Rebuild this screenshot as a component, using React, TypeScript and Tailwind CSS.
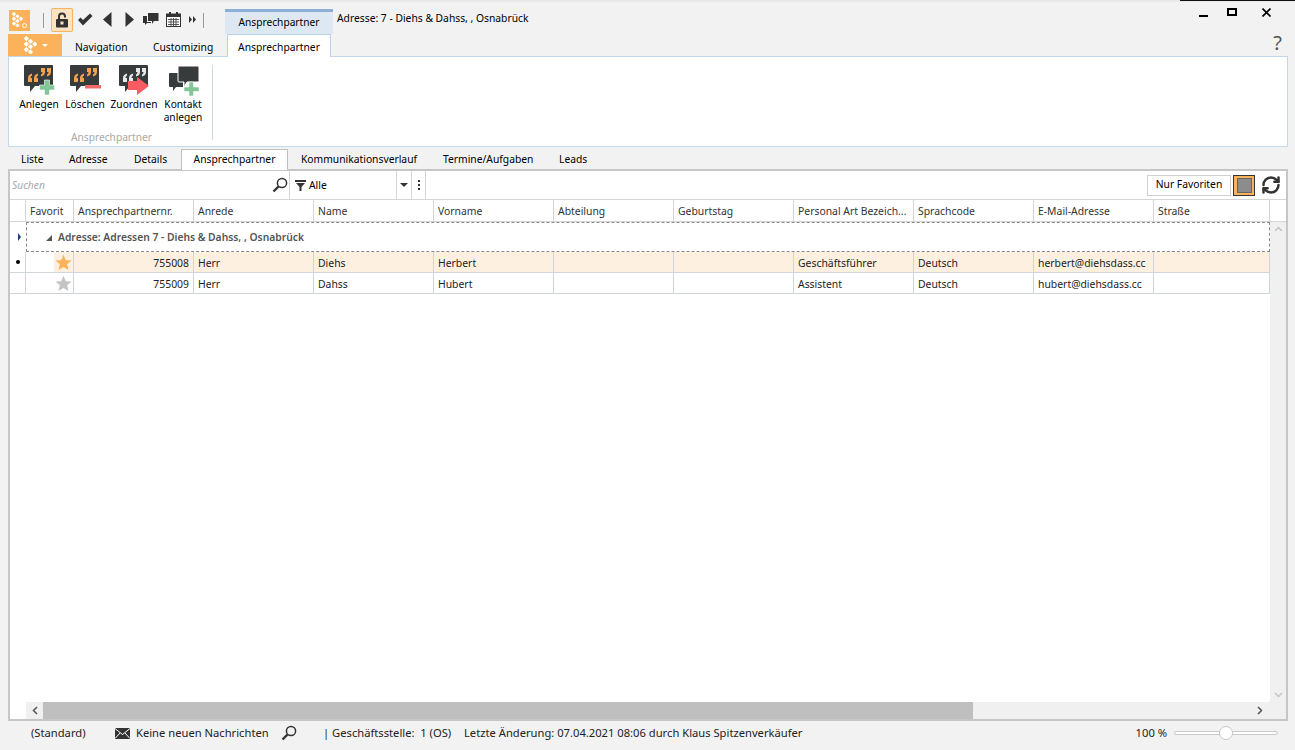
import { RefreshCw } from "lucide-react";

const font = "font-['Noto_Sans','Open_Sans',sans-serif]";

const columns = [
  { label: "Anrede", w: "w-[120px]" },
  { label: "Name", w: "w-[120px]" },
  { label: "Vorname", w: "w-[120px]" },
  { label: "Abteilung", w: "w-[120px]" },
  { label: "Geburtstag", w: "w-[120px]" },
  { label: "Personal Art Bezeich...", w: "w-[120px]" },
  { label: "Sprachcode", w: "w-[120px]" },
  { label: "E-Mail-Adresse", w: "w-[120px]" },
  { label: "Straße", w: "w-[116px]" },
];

const rows = [
  { nr: "755008", cells: ["Herr", "Diehs", "Herbert", "", "", "Geschäftsführer", "Deutsch", "herbert@diehsdass.cc", ""], active: true },
  { nr: "755009", cells: ["Herr", "Dahss", "Hubert", "", "", "Assistent", "Deutsch", "hubert@diehsdass.cc", ""], active: false },
];

// ── Icons ─────────────────────────────────────────────────────────────────────

function Dots({ w, h }: { w: number; h: number }) {
  const pts = [[2.5, 2.5], [2.5, 8.5], [2.5, 14.5], [7, 5.5], [7, 11.5], [11.5, 8.5], [7, 17]];
  return (
    <svg width={w} height={h} viewBox="0 0 14 19">
      {pts.map(([x, y], i) => (
        <rect key={i} x={x - 2} y={y - 2} width="4" height="4" transform={`rotate(45 ${x} ${y})`} fill="#fff" />
      ))}
    </svg>
  );
}

function Magnifier({ size }: { size: number }) {
  return (
    <svg width={size} height={size} viewBox="0 0 16 16">
      <circle cx="10" cy="6" r="4.6" fill="none" stroke="#333" strokeWidth="1.5" />
      <path d="M6.500 9.500L1.500 14.500" stroke="#333" strokeWidth="2.400" />
    </svg>
  );
}

function Bubble({ quote, badge }: { quote: string; badge: "plus" | "minus" | "arrow" }) {
  return (
    <svg width="31" height="31" viewBox="0 0 31 31">
      <path d="M1 0h27a1 1 0 0 1 1 1v19a1 1 0 0 1-1 1H11l-5 6v-6H1a1 1 0 0 1-1-1V1a1 1 0 0 1 1-1z" fill="#383b3c" />
      <path d="M4 17v-4q0-3.500 4-4.500v2q-1.500.5-1.500 2.500H8v4zM10 17v-4q0-3.500 4-4.500v2q-1.500.5-1.500 2.500H14v4z" fill={quote} />
      <path d="M27 3v4q0 3.500-4 4.500v-2q1.500-.5 1.500-2.500H23V3zM21 3v4q0 3.500-4 4.500v-2q1.500-.5 1.500-2.500H17V3z" fill={quote} />
      {badge === "plus" && <path d="M20.500 15h5v5h5v5h-5v5h-5v-5h-5v-5h5z" fill="#82c596" stroke="#fff" strokeWidth="0.6" />}
      {badge === "minus" && <rect x="15" y="20" width="16" height="3.500" fill="#ef6b6b" />}
      {badge === "arrow" && <path d="M9 16h9v-4l12 9-12 9v-5H9z" fill="#fa5c62" />}
    </svg>
  );
}

function ContactIcon() {
  return (
    <svg width="31" height="31" viewBox="0 0 31 31">
      <path d="M2 8h13v14H8l-3 4v-4H2a1 1 0 0 1-1-1V9a1 1 0 0 1 1-1z" fill="#383b3c" />
      <path d="M11 1h19a1 1 0 0 1 1 1v14a1 1 0 0 1-1 1H19l-3 5v-5h-5a1 1 0 0 1-1-1V2a1 1 0 0 1 1-1z" fill="#383b3c" stroke="#fff" strokeWidth="1" />
      <path d="M21 17h4.500v5H31v4.500h-5.500V31H21v-4.500h-5V22h5z" fill="#82c596" stroke="#fff" strokeWidth="0.6" />
    </svg>
  );
}

function Star({ color }: { color: string }) {
  return (
    <svg width="17" height="17" viewBox="0 0 24 24">
      <path d="M12 1l3.200 7.700 8.300.6-6.400 5.300 2 8.100L12 18.400l-7.100 4.300 2-8.100L.5 9.300l8.300-.6z" fill={color} />
    </svg>
  );
}

function RibbonButton({ label, icon, w }: { label: string; icon: React.ReactNode; w: string }) {
  return (
    <div className={`flex flex-col items-center ${w}`}>
      <div className="h-[33px] flex items-start">{icon}</div>
      <span className="text-[10.200px] leading-[13px] text-black text-center">{label}</span>
    </div>
  );
}

function Sep() {
  return <div className="w-[1px] h-[15px] bg-[#9a9a9a]" />;
}

// ── Top area ──────────────────────────────────────────────────────────────────

function TitleBar() {
  return (
    <div className="h-[34px] flex items-start relative border-t-2 border-[#e9e9e9]">
      <div className="ml-[9px] mt-[8px] w-[21px] h-[21px] bg-[#fbb25a] relative pl-[3px] pt-[2px]">
        <Dots w={11} h={15} />
        <span className="absolute right-[3px] bottom-[3px] w-[5px] h-[5px] rounded-full border border-white" />
      </div>
      <div className="ml-[13px] mt-[11px]"><Sep /></div>
      <div className="ml-[7px] mt-[6px] w-[22px] h-[24px] bg-[#fde3c4] border border-[#fbb25a] rounded-[2px] flex items-center justify-center">
        <svg width="14" height="16" viewBox="0 0 14 16">
          <path d="M3 7V4.500a4 4 0 0 1 8 0V5.500H9V4.500a2 2 0 0 0-4 0V7z" fill="#333" />
          <rect x="1" y="7" width="12" height="8.500" rx="1" fill="#333" />
          <rect x="5.500" y="9.500" width="3" height="3" fill="#fde3c4" />
        </svg>
      </div>
      <svg className="ml-[4px] mt-[11px]" width="16" height="13" viewBox="0 0 16 13">
        <path d="M1 7l2.500-2.500L6 7l7-6.500L15.500 3 6 12.500z" fill="#333" />
      </svg>
      <svg className="ml-[10px] mt-[10px]" width="9" height="15" viewBox="0 0 9 15">
        <path d="M8.500 0v15L0 7.500z" fill="#333" />
      </svg>
      <svg className="ml-[13px] mt-[10px]" width="9" height="15" viewBox="0 0 9 15">
        <path d="M.5 0v15L9 7.500z" fill="#333" />
      </svg>
      <svg className="ml-[9px] mt-[10px]" width="16" height="14" viewBox="0 0 16 14">
        <path d="M5 1h10.500v8H11l-2 3V9H5z" fill="#333" />
        <path d="M0 4h4v6h4v1H4l-2 2v-2H0z" fill="#333" />
      </svg>
      <svg className="ml-[7px] mt-[10px]" width="15" height="15" viewBox="0 0 15 15">
        <rect x=".5" y="2" width="14" height="12.500" fill="#fff" stroke="#333" />
        <rect x="0" y="2" width="15" height="3" fill="#333" />
        <rect x="3" y="0" width="2" height="3" fill="#333" />
        <rect x="10" y="0" width="2" height="3" fill="#333" />
        <path d="M2 7.500h11M2 10h11M2 12.500h11M5 6v8M7.500 6v8M10 6v8" stroke="#555" strokeWidth="1" />
      </svg>
      <svg className="ml-[8px] mt-[14px]" width="7" height="7" viewBox="0 0 7 7">
        <path d="M0 0l3 3.500L0 7zM4 0l3 3.500L4 7z" fill="#333" />
      </svg>
      <div className="ml-[7px] mt-[11px]"><Sep /></div>
      <div className="ml-[21px] mt-[7px] w-[108px] h-[25px] bg-[#dee8f3] border-t-[3px] border-[#8fb0d6] text-[10.200px] text-black flex items-center justify-center">
        Ansprechpartner
      </div>
      <span className="ml-[4px] mt-[9px] text-[10.300px] text-black">Adresse: 7 - Diehs &amp; Dahss, , Osnabrück</span>
      <div className="ml-auto mr-[24px] flex items-start mt-[4px]">
        <div className="w-[9px] h-[2px] bg-black mt-[9px]" />
        <div className="w-[10px] h-[8px] border-2 border-black mt-[2px] ml-[19px]" />
        <svg className="mt-[2px] ml-[25px]" width="9" height="9" viewBox="0 0 9 9">
          <path d="M.5.500l8 8M8.500.500l-8 8" stroke="#000" strokeWidth="1.600" />
        </svg>
      </div>
      <div className="absolute right-0 top-[-2px] w-[115px] h-[1px] bg-[#111]" />
    </div>
  );
}

function RibbonTabs() {
  return (
    <div className="h-[22px] flex items-stretch relative z-10 text-[10.300px] text-black">
      <div className="ml-[8px] w-[54px] bg-[#fbb25a] flex items-center justify-center gap-[5px] pl-[2px]">
        <Dots w={13} h={18} />
        <span className="w-0 h-0 border-x-[3px] border-x-transparent border-t-[3px] border-t-white" />
      </div>
      <span className="ml-[13px] w-[78px] mt-[6px]">Navigation</span>
      <span className="w-[74px] mt-[6px]">Customizing</span>
      <div className="w-[104px] h-[23px] bg-white border border-b-0 border-[#b9d0e8] flex items-center justify-center pt-[3px]">
        Ansprechpartner
      </div>
      <span className="ml-auto mr-[13px] text-[20px] leading-[20px] mt-[-1px] text-[#555]">?</span>
    </div>
  );
}

function Ribbon() {
  return (
    <div className="mx-[8px] w-[1280px] h-[91px] bg-white border border-[#c4d6e9] flex pl-[9px] pt-[8px]">
      <div className="w-[195px] flex flex-col items-center">
        <div className="flex items-start w-full h-[66px]">
          <RibbonButton label="Anlegen" w="w-[42px]" icon={<Bubble quote="#f5a24b" badge="plus" />} />
          <RibbonButton label="Löschen" w="w-[50px]" icon={<Bubble quote="#f5a24b" badge="minus" />} />
          <RibbonButton label="Zuordnen" w="w-[48px]" icon={<Bubble quote="#e8e8e8" badge="arrow" />} />
          <RibbonButton label="Kontakt anlegen" w="w-[50px]" icon={<ContactIcon />} />
        </div>
        <span className="text-[10.200px] leading-[13px] text-[#a9a9a9] mr-[8px]">Ansprechpartner</span>
      </div>
      <div className="w-[1px] h-[75px] bg-[#cfd8e3] ml-[-1px]" />
    </div>
  );
}

function PageTabs() {
  return (
    <div className="h-[21px] mt-[2px] flex items-start relative z-10 text-[10.300px] text-black pl-[21px]">
      <span className="w-[48px] mt-[3px]">Liste</span>
      <span className="w-[65px] mt-[3px]">Adresse</span>
      <span className="w-[47px] mt-[3px]">Details</span>
      <div className="w-[107px] h-[21px] bg-white border border-b-0 border-[#c0c0c0] flex items-center justify-center">
        Ansprechpartner
      </div>
      <span className="ml-[13px] w-[142px] mt-[3px]">Kommunikationsverlauf</span>
      <span className="w-[116px] mt-[3px]">Termine/Aufgaben</span>
      <span className="mt-[3px]">Leads</span>
    </div>
  );
}

// ── Grid panel ────────────────────────────────────────────────────────────────

function FilterBar() {
  return (
    <div className="h-[29px] flex items-stretch border-b border-[#d5d5d5] text-[10.300px]">
      <div className="w-[280px] flex items-center pl-[2px] pr-[1px] border-r border-[#d5d5d5]">
        <span className="italic text-[#a8a8a8] flex-1 pt-[2px]">Suchen</span>
        <Magnifier size={16} />
      </div>
      <div className="w-[107px] flex items-center pl-[5px] gap-[3px] border-r border-[#d5d5d5]">
        <svg width="11" height="11" viewBox="0 0 11 11">
          <path d="M0 0h11v2H0zM1 3h9L6.500 7v4h-2V7z" fill="#333" />
        </svg>
        <span className="text-black pt-[2px]">Alle</span>
      </div>
      <div className="w-[15px] flex items-center justify-center border-r border-[#d5d5d5]">
        <span className="w-0 h-0 border-x-[4px] border-x-transparent border-t-[4px] border-t-[#333]" />
      </div>
      <div className="w-[14px] flex flex-col items-center justify-center gap-[2px] border-r border-[#d5d5d5]">
        <span className="w-[2px] h-[2px] bg-[#333]" />
        <span className="w-[2px] h-[2px] bg-[#333]" />
        <span className="w-[2px] h-[2px] bg-[#333]" />
      </div>
      <div className="flex-1 flex items-center justify-end pr-[5px] gap-[2px]">
        <div className="w-[84px] h-[21px] border border-[#d0d0d0] bg-white text-black flex items-center justify-center">
          Nur Favoriten
        </div>
        <div className="w-[22px] h-[21px] border border-[#333] bg-[#fbb25a] flex items-center justify-center">
          <div className="w-[15px] h-[15px] bg-[#8c8c8c] border border-[#666]" />
        </div>
        <RefreshCw size={20} strokeWidth={3} className="text-[#333] ml-[4px]" />
      </div>
    </div>
  );
}

function HeaderRow() {
  return (
    <div className="h-[22px] flex border-b border-[#d5d5d5] text-[10.400px] text-[#333]">
      <div className="w-[16px] border-r border-[#d5d5d5]" />
      <div className="w-[48px] border-r border-[#d5d5d5] pl-[4px] pt-[3px] flex items-center">Favorit</div>
      <div className="w-[120px] border-r border-[#d5d5d5] pl-[4px] pt-[3px] flex items-center">Ansprechpartnernr.</div>
      {columns.map((c) => (
        <div key={c.label} className={`${c.w} border-r border-[#d5d5d5] pl-[4px] pt-[3px] flex items-center`}>{c.label}</div>
      ))}
    </div>
  );
}

function GroupRow() {
  return (
    <div className="h-[30px] flex">
      <div className="w-[16px] flex items-center justify-center pl-[2px]">
        <span className="w-0 h-0 border-y-[4px] border-y-transparent border-l-[3px] border-l-[#1c3f7c]" />
      </div>
      <div className="w-[1244px] border border-dashed border-[#8a8a8a] flex items-center pl-[19px] pt-[2px] text-[10.300px] font-semibold text-[#555]">
        <span className="w-0 h-0 border-l-[6px] border-l-transparent border-b-[6px] border-b-[#555] mr-[6px]" />
        Adresse: Adressen 7 - Diehs &amp; Dahss, , Osnabrück
      </div>
    </div>
  );
}

function DataRow({ nr, cells, active }: { nr: string; cells: string[]; active: boolean }) {
  const bg = active ? "bg-[#fdf0e0]" : "bg-white";
  return (
    <div className="h-[21px] flex border-b border-[#d0d5dc] text-[10.400px] text-[#222]">
      <div className="w-[16px] flex items-center justify-center border-r border-[#d5d5d5] bg-white">
        {active && <span className="w-[4px] h-[4px] rounded-full bg-black" />}
      </div>
      <div className="w-[28px] bg-white" />
      <div className={`w-[20px] ${bg} border-r border-[#d0d5dc] flex items-center justify-center`}>
        <Star color={active ? "#fbb25a" : "#c4c4c4"} />
      </div>
      <div className={`w-[120px] ${bg} border-r border-[#d0d5dc] pr-[4px] pt-[4px] flex items-center justify-end`}>{nr}</div>
      {columns.map((c, i) => (
        <div key={c.label} className={`${c.w} ${bg} border-r border-[#d0d5dc] pl-[4px] pt-[4px] flex items-center`}>{cells[i]}</div>
      ))}
    </div>
  );
}

function Panel() {
  return (
    <div className="mx-[8px] mt-[-1px] w-[1280px] h-[552px] border-2 border-[#c6c6c6] bg-white flex flex-col">
      <FilterBar />
      <HeaderRow />
      <div className="flex-1 flex min-h-0">
        <div className="w-[1260px] flex flex-col">
          <GroupRow />
          <DataRow {...rows[0]} />
          <DataRow {...rows[1]} />
        </div>
        <div className="flex-1 bg-[#f0f0f0] flex flex-col items-center justify-between py-[4px] text-[#c4c4c4]">
          <svg width="9" height="6" viewBox="0 0 9 6"><path d="M1 5l3.500-3.500L8 5" fill="none" stroke="currentColor" strokeWidth="1.5" /></svg>
          <svg width="9" height="6" viewBox="0 0 9 6"><path d="M1 1l3.500 3.500L8 1" fill="none" stroke="currentColor" strokeWidth="1.5" /></svg>
        </div>
      </div>
      <div className="h-[17px] flex">
        <div className="w-[16px] bg-white" />
        <div className="flex-1 bg-[#f0f0f0] flex items-center text-[#555]">
          <div className="w-[17px] flex justify-center">
            <svg width="6" height="9" viewBox="0 0 6 9"><path d="M5 1L1.500 4.500 5 8" fill="none" stroke="currentColor" strokeWidth="1.5" /></svg>
          </div>
          <div className="w-[930px] h-full bg-[#bfbfbf]" />
          <div className="flex-1 flex justify-end pr-[23px]">
            <svg width="6" height="9" viewBox="0 0 6 9"><path d="M1 1l3.500 3.500L1 8" fill="none" stroke="currentColor" strokeWidth="1.5" /></svg>
          </div>
        </div>
      </div>
    </div>
  );
}

function StatusBar() {
  return (
    <div className="h-[29px] flex items-center text-[11.200px] text-[#222] pb-[5px]">
      <span className="ml-[31px] w-[84px]">(Standard)</span>
      <svg width="15" height="11" viewBox="0 0 15 11">
        <rect width="15" height="11" fill="#333" />
        <path d="M0 .5l7.500 6 7.500-6M0 10.500l5-5.500M15 10.500l-5-5.500" fill="none" stroke="#fff" strokeWidth="1" />
      </svg>
      <span className="ml-[6px] w-[133px]">Keine neuen Nachrichten</span>
      <div className="ml-[12px] w-[16px]"><Magnifier size={16} /></div>
      <span className="ml-[26px] w-[141px]">| Geschäftsstelle:&nbsp; 1 (OS)</span>
      <span>Letzte Änderung: 07.04.2021 08:06 durch Klaus Spitzenverkäufer</span>
      <span className="ml-auto mr-[7px]">100 %</span>
      <div className="relative w-[104px] h-[4px] mr-[17px] border border-[#c8c8c8] rounded-full bg-white">
        <span className="absolute left-[44px] top-[-6px] w-[14px] h-[14px] rounded-full bg-white border border-[#c8c8c8]" />
      </div>
    </div>
  );
}

export default function App() {
  return (
    <div className={`w-[1295px] h-[750px] overflow-hidden bg-[#f2f2f2] ${font}`}>
      <TitleBar />
      <RibbonTabs />
      <Ribbon />
      <PageTabs />
      <Panel />
      <StatusBar />
    </div>
  );
}
